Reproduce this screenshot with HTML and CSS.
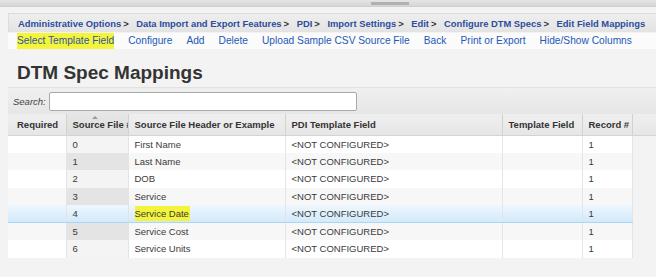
FILE: index.html
```html
<!DOCTYPE html>
<html>
	<head>
		<meta charset="UTF-8">
		<title>DTM Spec Mappings</title>
		<link rel="stylesheet" href="styles.css">
	</head>
	<body>
		<div class="topbar"><span class="thumb"></span></div>
		<div class="page">
			<div class="crumbs">
				<a href="#">Administrative Options</a><span class="sep">&gt;</span>
				<a href="#">Data Import and Export Features</a><span class="sep">&gt;</span>
				<a href="#">PDI</a><span class="sep">&gt;</span>
				<a href="#">Import Settings</a><span class="sep">&gt;</span>
				<a href="#">Edit</a><span class="sep">&gt;</span>
				<a href="#">Configure DTM Specs</a><span class="sep">&gt;</span>
				<a href="#">Edit Field Mappings</a>
			</div>
			<div class="actions">
				<a href="#" class="mark">Select Template Field</a>
				<a href="#">Configure</a>
				<a href="#">Add</a>
				<a href="#">Delete</a>
				<a href="#">Upload Sample CSV Source File</a>
				<a href="#">Back</a>
				<a href="#">Print or Export</a>
				<a href="#">Hide/Show Columns</a>
			</div>
			<h1 class="title">DTM Spec Mappings</h1>
			<div class="search">
				<label>Search:</label>
				<input type="text">
			</div>
			<table class="grid">
				<colgroup>
					<col style="width:58px">
					<col style="width:62px">
					<col style="width:157px">
					<col style="width:217px">
					<col style="width:80px">
					<col style="width:50px">
					<col>
				</colgroup>
				<thead>
					<tr>
						<th class="req">Required</th>
						<th class="sorted">Source File #</th>
						<th>Source File Header or Example</th>
						<th>PDI Template Field</th>
						<th>Template Field</th>
						<th>Record #</th>
						<th class="fill"></th>
					</tr>
				</thead>
				<tbody>
					<tr>
						<td></td><td class="sorted">0</td><td>First Name</td><td>&lt;NOT CONFIGURED&gt;</td><td></td><td>1</td><td class="fill"></td>
					</tr>
					<tr class="odd">
						<td></td><td class="sorted">1</td><td>Last Name</td><td>&lt;NOT CONFIGURED&gt;</td><td></td><td>1</td><td class="fill"></td>
					</tr>
					<tr>
						<td></td><td class="sorted">2</td><td>DOB</td><td>&lt;NOT CONFIGURED&gt;</td><td></td><td>1</td><td class="fill"></td>
					</tr>
					<tr class="odd">
						<td></td><td class="sorted">3</td><td>Service</td><td>&lt;NOT CONFIGURED&gt;</td><td></td><td>1</td><td class="fill"></td>
					</tr>
					<tr class="hover">
						<td></td><td class="sorted">4</td><td><span class="hl">Service Date</span></td><td>&lt;NOT CONFIGURED&gt;</td><td></td><td>1</td><td class="fill"></td>
					</tr>
					<tr class="odd">
						<td></td><td class="sorted">5</td><td>Service Cost</td><td>&lt;NOT CONFIGURED&gt;</td><td></td><td>1</td><td class="fill"></td>
					</tr>
					<tr>
						<td></td><td class="sorted">6</td><td>Service Units</td><td>&lt;NOT CONFIGURED&gt;</td><td></td><td>1</td><td class="fill"></td>
					</tr>
				</tbody>
			</table>
		</div>
	</body>
</html>
```

FILE: styles.css
```css
*{
	margin: 0;
	padding: 0;
	box-sizing: border-box;
}
body{
	background: #f3f3f3;
	font-family: "Liberation Sans", Arial, sans-serif;
	color: #333;
	width: 656px;
	overflow: hidden;
}
.topbar{
	height: 7px;
	background: linear-gradient(#e4e4e4, #d6d6d6);
	border-bottom: 1px solid #cfcfcf;
	padding-left: 371px;
	padding-top: 2px;
}
.topbar .thumb{
	display: block;
	width: 38px;
	height: 3px;
	background: #b0b0b0;
}
.page{
	padding: 6px 0 0 8px;
}
.crumbs{
	height: 19px;
	line-height: 19px;
	padding-left: 9px;
	background: linear-gradient(#eeeeee, #e3e3e3);
	border-top: 1px solid #dcdcdc;
	border-left: 1px solid #dcdcdc;
	font-size: 9.4px;
	font-weight: bold;
	white-space: nowrap;
	overflow: hidden;
}
.crumbs a{
	color: #2d4d9c;
	text-decoration: none;
}
.crumbs .sep{
	color: #333;
	margin: 0 5px 0 2px;
}
.actions{
	display: flex;
	gap: 14px;
	height: 16px;
	margin-top: 1px;
	padding-left: 9px;
	line-height: 15px;
	font-size: 10.2px;
	background: #fbfbfb;
	white-space: nowrap;
}
.actions a{
	color: #2459b8;
	text-decoration: none;
}
.actions .mark{
	background: #f4f43c;
	color: #2f55a0;
}
.title{
	height: 24px;
	line-height: 24px;
	margin-top: 12px;
	padding-left: 9px;
	font-size: 19px;
	font-weight: bold;
	color: #333;
}
.search{
	display: flex;
	align-items: center;
	height: 27px;
	margin-top: 2px;
	padding-left: 5px;
	background: linear-gradient(#f0f0f0, #e6e6e6);
	border-top: 1px solid #e2e2e2;
}
.search label{
	font-style: italic;
	font-size: 9.5px;
	color: #444;
	width: 36px;
}
.search input{
	width: 308px;
	height: 19px;
	border: 1px solid #a9a9a9;
	border-radius: 2px;
	background: #fff;
}
.grid{
	width: 648px;
	table-layout: fixed;
	border-collapse: collapse;
	font-size: 9.5px;
}
.grid th{
	height: 21px;
	text-align: left;
	padding-left: 6px;
	font-weight: bold;
	color: #333;
	background: linear-gradient(#efefef, #e6e6e6);
	border-right: 1px solid #d2d2d2;
	border-bottom: 1px solid #d4d4d4;
	white-space: nowrap;
	overflow: hidden;
}
.grid th.req{
	padding-left: 9px;
}
.grid th.sorted{
	position: relative;
	background: linear-gradient(#e6e6e6, #dcdcdc);
}
.grid th.sorted::before{
	content: "";
	position: absolute;
	left: 25px;
	top: 2px;
	border-left: 3px solid transparent;
	border-right: 3px solid transparent;
	border-bottom: 3px solid #999;
}
.grid th.fill{
	border-right: none;
}
.grid td{
	height: 17.5px;
	padding-left: 6px;
	color: #3a3a3a;
	background: #fff;
	border-right: 1px solid #e4e4e4;
	white-space: nowrap;
	overflow: hidden;
}
.grid tr.odd td{
	background: #f7f7f7;
}
.grid td.sorted{
	background: #f4f4f4;
}
.grid tr.odd td.sorted{
	background: #e4e4e4;
}
.grid td.fill,
.grid tr.odd td.fill{
	background: transparent;
	border-right: none;
}
.grid tr.hover td{
	background: linear-gradient(#eef7fe, #d2e9fa);
	border-bottom: 1px solid #aed6f3;
}
.grid tr.hover td.fill{
	background: transparent;
	border-bottom: none;
}
.hl{
	background: #f4f43c;
	padding: 2px 1px 2px 0;
}
```
